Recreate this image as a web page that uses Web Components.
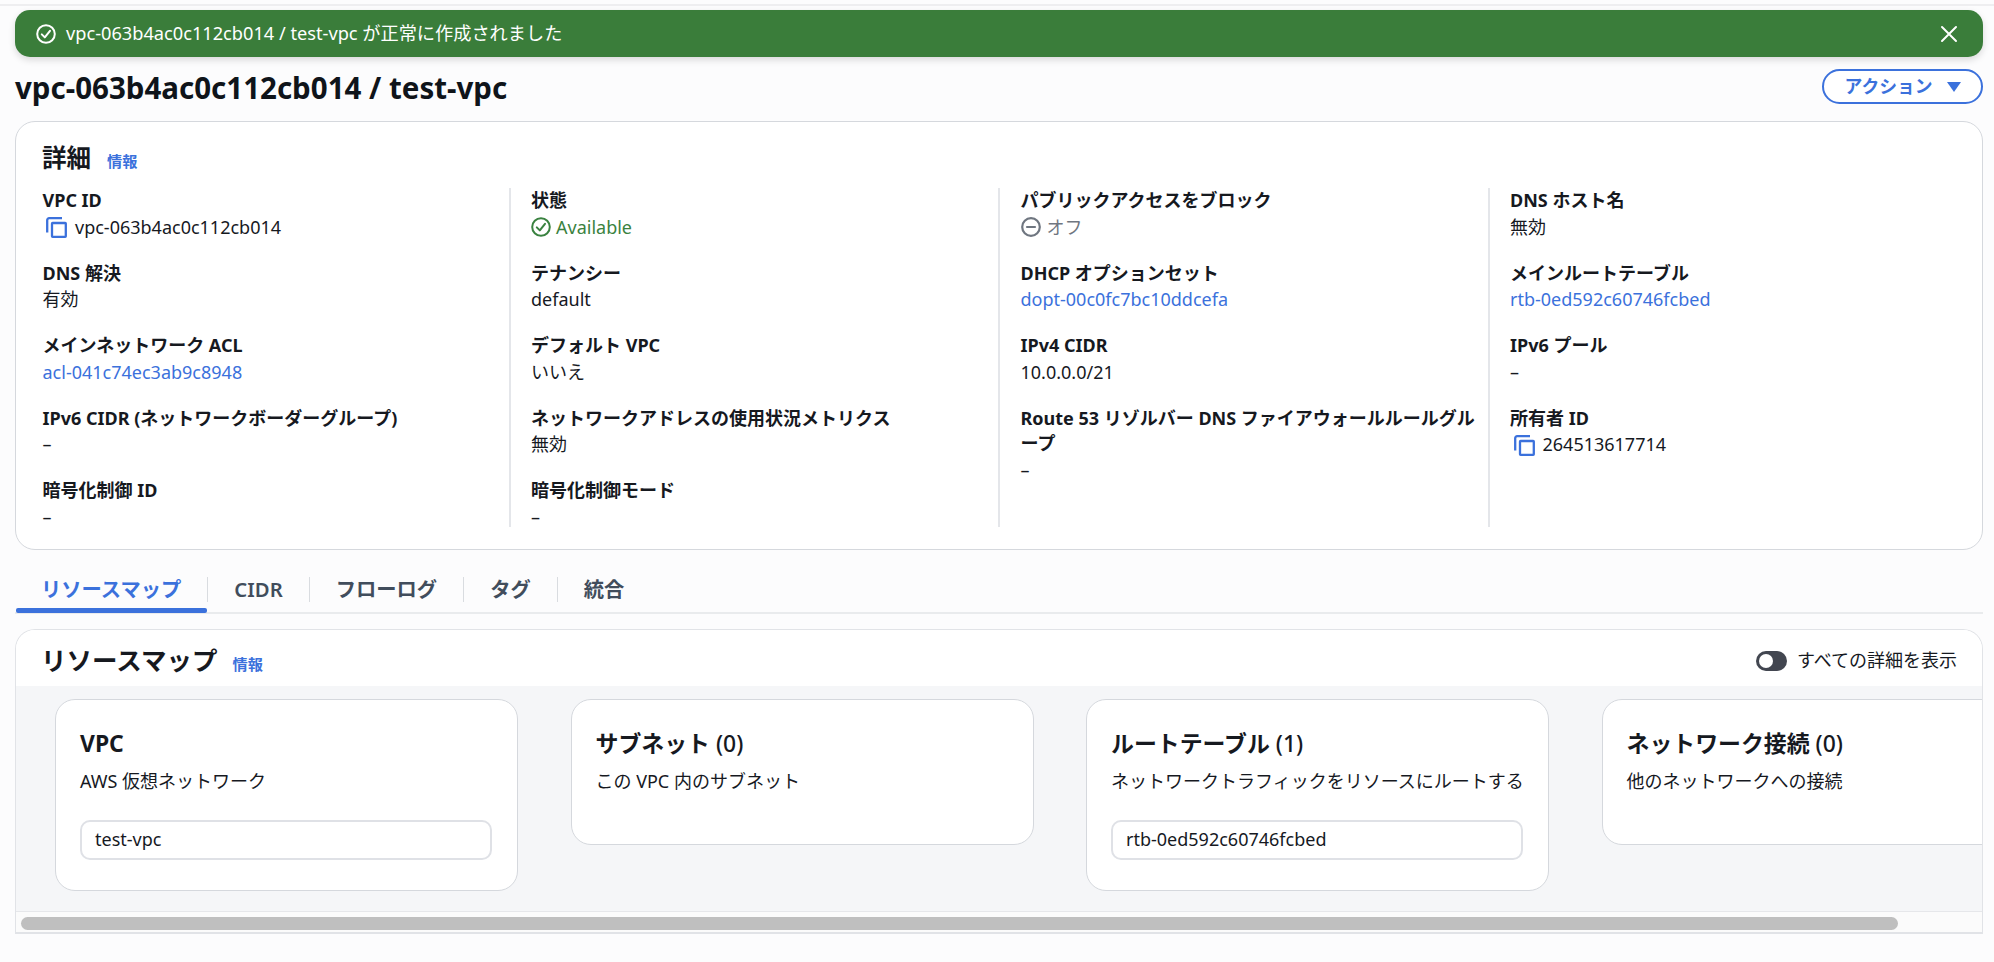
<!DOCTYPE html>
<html lang="ja"><head><meta charset="utf-8"><title>VPC</title>
<style>
html,body{margin:0;padding:0;background:#fcfcfd;height:962px;overflow:hidden}
body{font:400 18px/25.4px "Noto Sans","Noto Sans CJK JP",sans-serif;color:#16191f}
x-app{display:block}
</style></head><body>
<x-app>
<x-flash>vpc-063b4ac0c112cb014 / test-vpc が正常に作成されました</x-flash>
<x-pagehead title-text="vpc-063b4ac0c112cb014 / test-vpc"></x-pagehead>
<x-details>
 <x-col>
  <x-kv label="VPC ID" copy>vpc-063b4ac0c112cb014</x-kv>
  <x-kv label="DNS 解決">有効</x-kv>
  <x-kv label="メインネットワーク ACL" link>acl-041c74ec3ab9c8948</x-kv>
  <x-kv label="IPv6 CIDR (ネットワークボーダーグループ)">–</x-kv>
  <x-kv label="暗号化制御 ID">–</x-kv>
 </x-col>
 <x-col divider>
  <x-kv label="状態" status="ok">Available</x-kv>
  <x-kv label="テナンシー">default</x-kv>
  <x-kv label="デフォルト VPC">いいえ</x-kv>
  <x-kv label="ネットワークアドレスの使用状況メトリクス">無効</x-kv>
  <x-kv label="暗号化制御モード">–</x-kv>
 </x-col>
 <x-col divider>
  <x-kv label="パブリックアクセスをブロック" status="off">オフ</x-kv>
  <x-kv label="DHCP オプションセット" link>dopt-00c0fc7bc10ddcefa</x-kv>
  <x-kv label="IPv4 CIDR">10.0.0.0/21</x-kv>
  <x-kv label="Route 53 リゾルバー DNS ファイアウォールルールグループ">–</x-kv>
 </x-col>
 <x-col divider>
  <x-kv label="DNS ホスト名">無効</x-kv>
  <x-kv label="メインルートテーブル" link>rtb-0ed592c60746fcbed</x-kv>
  <x-kv label="IPv6 プール">–</x-kv>
  <x-kv label="所有者 ID" copy>264513617714</x-kv>
 </x-col>
</x-details>
<x-tabs>
 <x-tab active>リソースマップ</x-tab><x-tab>CIDR</x-tab><x-tab>フローログ</x-tab><x-tab>タグ</x-tab><x-tab>統合</x-tab>
</x-tabs>
<x-map>
 <x-node name="VPC" desc="AWS 仮想ネットワーク" value="test-vpc"></x-node>
 <x-node name="サブネット" count="(0)" desc="この VPC 内のサブネット"></x-node>
 <x-node name="ルートテーブル" count="(1)" desc="ネットワークトラフィックをリソースにルートする" value="rtb-0ed592c60746fcbed"></x-node>
 <x-node name="ネットワーク接続" count="(0)" desc="他のネットワークへの接続"></x-node>
</x-map>
</x-app>
<script>
const CHECK=(c,w=20)=>`<svg width="${w}" height="${w}" viewBox="0 0 20 20" fill="none" stroke="${c}" stroke-width="2" stroke-linecap="round" stroke-linejoin="round"><circle cx="10" cy="10" r="8.8"/><path d="M5.8 10.4l3 3 5.2-6.6"/></svg>`;
const OFF=`<svg width="20" height="20" viewBox="0 0 20 20" fill="none" stroke="#6f7680" stroke-width="2.2"><circle cx="10" cy="10" r="8.8"/><path d="M6 10h8" stroke-linecap="round"/></svg>`;
const COPY=`<svg width="21" height="21" viewBox="0 0 21 21" fill="none" stroke="#3b71dc" stroke-width="2.3"><path d="M1.2 15.5V3.2a2 2 0 0 1 2-2H16"/><rect x="6" y="6" width="13.8" height="13.8" rx=".6"/></svg>`;
function def(name,css,html){
  customElements.define(name,class extends HTMLElement{
    constructor(){super();this.attachShadow({mode:"open"});}
    connectedCallback(){this.shadowRoot.innerHTML=`<style>${css}</style>`+(typeof html==="function"?html(this):html);}
  });
}
const h=(s)=>String(s??"").replace(/&/g,"&amp;");
def("x-flash",`:host{display:flex;align-items:center;box-sizing:border-box;height:47px;margin:10px 11px 0 15px;background:#3a7d3a;border-radius:15px;color:#fff;padding:0 16px 0 20.5px;box-shadow:0 3px 7px rgba(0,0,0,.14);position:relative;font-size:18.2px}
 .t{margin-left:10.5px;flex:1}.x{display:flex}:host::before{content:"";position:absolute;left:-15px;right:-11px;top:-6px;height:2px;background:#eeeef0}`,
 `${CHECK("#fff")}<span class="t"><slot></slot></span><svg class="x" width="18" height="18" viewBox="0 0 18 18" stroke="#fff" stroke-width="2" stroke-linecap="round" style="margin-right:9px"><path d="M2 2l14 14M16 2L2 16"/></svg>`);
def("x-pagehead",`:host{display:flex;justify-content:space-between;align-items:center;height:35px;margin:12px 11px 17px 15px}
 h1{margin:1px 0 0;font-size:29.5px;line-height:35px;font-weight:700;color:#0f141a}
 button{all:unset;box-sizing:border-box;width:161px;height:35px;border:2px solid #3b71dc;border-radius:18px;color:#3b71dc;font-weight:700;font-size:17.8px;display:flex;align-items:center;justify-content:center;gap:14px;background:#fff}
 svg{display:block}`,
 el=>`<h1>${h(el.getAttribute("title-text"))}</h1><button><span>アクション</span><svg width="14" height="10" viewBox="0 0 14 10"><path d="M0 0h14L7 10z" fill="#3b71dc"/></svg></button>`);
def("x-details",`:host{display:block;box-sizing:border-box;height:429px;margin:0 11px 0 15px;background:#fff;border:1px solid #d5d8dd;border-radius:20px;padding:19px 3px 0}
 header{display:flex;align-items:baseline;gap:16px;padding-left:23px;height:34px;margin-bottom:13px;line-height:34px}
 h2{margin:0;font-size:24.5px;font-weight:700;color:#16191f}a{color:#3b71dc;font-size:15.2px;font-weight:700}
 .g{display:grid;grid-template-columns:repeat(4,489.5px)}`,
 `<header><h2>詳細</h2><a>情報</a></header><div class="g"><slot></slot></div>`);
def("x-col",`:host{display:flex;flex-direction:column;gap:21.2px;box-sizing:border-box;height:339px;padding:0 8px 0 21.5px;border-left:2px solid transparent}
 :host([divider]){border-left-color:#e4e6ea;padding-left:20.5px}`,`<slot></slot>`);
def("x-kv",`:host{display:block;line-height:25.4px}
 .l{font-weight:700;color:#16191f}.v{display:flex;align-items:center;gap:8px;height:26px;padding-top:1px;margin-bottom:-1px}
 :host([link]) .v{color:#3b71dc}
 :host([copy]) .v{padding-left:3.5px}
 .ok{color:#3a8240;gap:5px!important}.off{color:#6f7680;gap:6px!important}`,
 el=>{const st=el.getAttribute("status");let ic="";
   if(st==="ok")ic=CHECK("#3a8240");if(st==="off")ic=OFF;if(el.hasAttribute("copy"))ic=COPY;
   return `<div class="l">${h(el.getAttribute("label"))}</div><div class="v ${st||""}">${ic}<span><slot></slot></span></div>`;});
def("x-tabs",`:host{display:flex;box-sizing:border-box;height:64px;margin:0 11px 0 15px;border-bottom:2px solid #e9ebed}`,`<slot></slot>`);
def("x-tab",`:host{display:block;box-sizing:border-box;height:62.5px;padding-top:26.5px;font-size:20.3px;font-weight:600;color:#414d5c}
 .w{display:flex;height:25px;line-height:25px;border-right:1.5px solid #d9dce0;padding:0 26px}
 .u{height:4.5px;margin:6.5px 1px 0;border-radius:2px;background:transparent}
 :host([active]){color:#3b71dc}:host([active]) .u{background:#3b71dc}
 :host(:last-child) .w{border-right:0}`,`<div class="w"><slot></slot></div><div class="u"></div>`);
def("x-map",`:host{display:block;box-sizing:border-box;height:305px;margin:15px 11px 0 15px;background:#fff;border:1px solid #e1e3e7;border-bottom-width:2px;border-radius:20px 20px 0 0;overflow:hidden}
 header{display:flex;align-items:center;justify-content:space-between;height:56px;padding:5px 25px 0 25px;box-sizing:border-box;background:#fff}
 .hl{display:flex;align-items:baseline;gap:15px}
 h2{margin:0;font-size:25.5px;font-weight:700;line-height:34px}a{color:#3b71dc;font-size:15.2px;font-weight:700}
 .tg{display:flex;align-items:center;gap:10px;margin-top:1px}
 .sw{width:31px;height:20px;border-radius:10px;background:#424650;display:flex;align-items:center;padding-left:3px;box-sizing:border-box}
 .sw b{width:14px;height:14px;border-radius:50%;background:#fff;display:block}
 .body{display:flex;gap:52.5px;align-items:flex-start;height:225px;box-sizing:border-box;padding:13px 0 0 39px;background:#f5f6f8;overflow:hidden}
 .bar{height:23px;box-sizing:border-box;border-top:1px solid #e6e7ea;background:#fbfbfb;padding:5px 0 0 4.5px}
 .th{width:1877px;height:13px;border-radius:7px;background:#bfbfbf}`,
 `<header><div class="hl"><h2>リソースマップ</h2><a>情報</a></div><div class="tg"><div class="sw"><b></b></div><span>すべての詳細を表示</span></div></header>
  <div class="body"><slot></slot></div><div class="bar"><div class="th"></div></div>`);
def("x-node",`:host{display:block;box-sizing:border-box;flex:none;width:463px;background:#fff;border:1.5px solid #d5d8dd;border-radius:20px;padding:29px 24px 0;height:146px}
 :host([value]){height:192px}
 .n{font-size:22.9px;font-weight:700;line-height:30px}.n span{font-weight:500}
 .d{margin-top:9px;line-height:26px}
 .i{box-sizing:border-box;height:40px;margin-top:26px;width:412px;border:2.5px solid #dfe1e6;border-radius:10px;padding:0 13px;display:flex;align-items:center;background:#fff}`,
 el=>{const c=el.getAttribute("count"),v=el.getAttribute("value");
   return `<div class="n">${h(el.getAttribute("name"))}${c?` <span>${c}</span>`:""}</div><div class="d">${h(el.getAttribute("desc"))}</div>${v?`<div class="i">${h(v)}</div>`:""}`;});
</script>
</body></html>
